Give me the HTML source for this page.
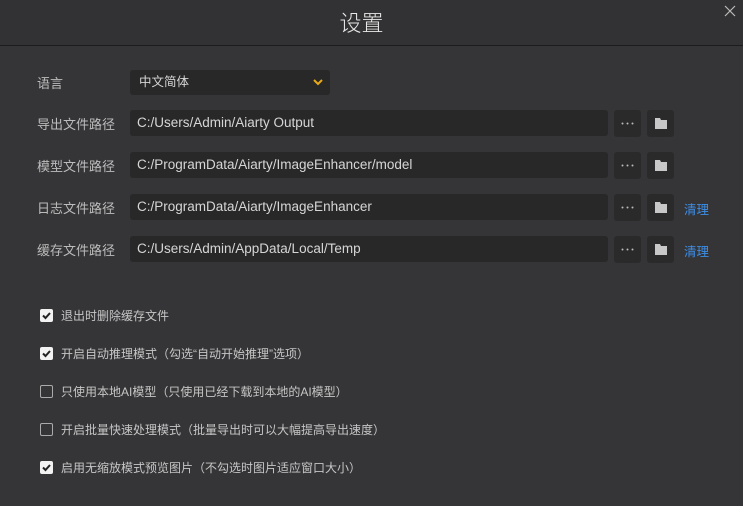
<!DOCTYPE html>
<html><head><meta charset="utf-8"><style>
*{margin:0;padding:0;box-sizing:border-box}
body{width:743px;height:506px;background:#353537;font-family:"Liberation Sans","Noto Sans CJK SC",sans-serif;color:#c8c8c8;position:relative;overflow:hidden;font-size:13px}
.hdr{position:absolute;left:0;top:0;width:743px;height:46px;background:#323234;border-bottom:1px solid #1c1c1c}
.title{position:absolute;left:0;width:723px;top:6px;text-align:center;font-size:22px;color:#e8e8e8;font-weight:300}
.x{position:absolute;left:724px;top:5px}
.lbl{position:absolute;left:37px;font-size:13px;color:#bcbcbc}
.inp{position:absolute;left:130px;width:478px;height:26px;background:#282829;border-radius:3px;line-height:26px;padding-left:7px;color:#d6d6d6;font-size:13.5px}
.btn{position:absolute;width:27px;height:27px;background:#2a2a2b;border-radius:3px}
.dots{left:614px}
.dots svg{position:absolute;left:7px;top:12px}
.fold{left:647px}
.fold svg{position:absolute;left:8px;top:8px}
.clr{position:absolute;left:684px;color:#3d8ee8;font-size:12.5px}
.cb{position:absolute;left:40px;width:13px;height:13px;border-radius:2px}
.on{background:#f2f2f2}
.off{border:1px solid #aaa}
.ct{position:absolute;left:61px;font-size:12px;color:#c6c6c6}
</style></head><body>
<div class="hdr"><div class="title">设置</div><svg class="x" width="12" height="12"><path d="M1 1L11 11M11 1L1 11" stroke="#bbb" stroke-width="1.2"/></svg></div>
<div class="lbl" style="top:73px">语言</div>
<div class="inp" style="top:70px;width:200px;height:25px;line-height:25px;font-size:12.5px;padding-left:9px">中文简体
<svg style="position:absolute;left:183px;top:9px" width="10" height="7" viewBox="0 0 10 7"><path d="M1 1L5 5L9 1" stroke="#e8a917" stroke-width="2" fill="none"/></svg></div>

<div class="lbl" style="top:114px">导出文件路径</div>
<div class="inp" style="top:110px">C:/Users/Admin/Aiarty Output</div>
<div class="btn dots" style="top:110px"><svg width="13" height="3"><circle cx="1.5" cy="1.5" r="1" fill="#bbb"/><circle cx="6.5" cy="1.5" r="1" fill="#bbb"/><circle cx="11.5" cy="1.5" r="1" fill="#bbb"/></svg></div>
<div class="btn fold" style="top:110px"><svg width="12" height="11"><path d="M0 0H5L6 2H12V11H0Z" fill="#c8c8c8"/></svg></div>

<div class="lbl" style="top:156px">模型文件路径</div>
<div class="inp" style="top:152px">C:/ProgramData/Aiarty/ImageEnhancer/model</div>
<div class="btn dots" style="top:152px"><svg width="13" height="3"><circle cx="1.5" cy="1.5" r="1" fill="#bbb"/><circle cx="6.5" cy="1.5" r="1" fill="#bbb"/><circle cx="11.5" cy="1.5" r="1" fill="#bbb"/></svg></div>
<div class="btn fold" style="top:152px"><svg width="12" height="11"><path d="M0 0H5L6 2H12V11H0Z" fill="#c8c8c8"/></svg></div>

<div class="lbl" style="top:198px">日志文件路径</div>
<div class="inp" style="top:194px">C:/ProgramData/Aiarty/ImageEnhancer</div>
<div class="btn dots" style="top:194px"><svg width="13" height="3"><circle cx="1.5" cy="1.5" r="1" fill="#bbb"/><circle cx="6.5" cy="1.5" r="1" fill="#bbb"/><circle cx="11.5" cy="1.5" r="1" fill="#bbb"/></svg></div>
<div class="btn fold" style="top:194px"><svg width="12" height="11"><path d="M0 0H5L6 2H12V11H0Z" fill="#c8c8c8"/></svg></div>
<div class="clr" style="top:199px">清理</div>

<div class="lbl" style="top:240px">缓存文件路径</div>
<div class="inp" style="top:236px">C:/Users/Admin/AppData/Local/Temp</div>
<div class="btn dots" style="top:236px"><svg width="13" height="3"><circle cx="1.5" cy="1.5" r="1" fill="#bbb"/><circle cx="6.5" cy="1.5" r="1" fill="#bbb"/><circle cx="11.5" cy="1.5" r="1" fill="#bbb"/></svg></div>
<div class="btn fold" style="top:236px"><svg width="12" height="11"><path d="M0 0H5L6 2H12V11H0Z" fill="#c8c8c8"/></svg></div>
<div class="clr" style="top:241px">清理</div>

<div class="cb on" style="top:309px"><svg width="13" height="13"><path d="M3 6.5L5.5 9L10 4" stroke="#222" stroke-width="2" fill="none"/></svg></div>
<div class="ct" style="top:307px">退出时删除缓存文件</div>
<div class="cb on" style="top:347px"><svg width="13" height="13"><path d="M3 6.5L5.5 9L10 4" stroke="#222" stroke-width="2" fill="none"/></svg></div>
<div class="ct" style="top:345px">开启自动推理模式（勾选“自动开始推理”选项）</div>
<div class="cb off" style="top:385px"></div>
<div class="ct" style="top:383px">只使用本地AI模型（只使用已经下载到本地的AI模型）</div>
<div class="cb off" style="top:423px"></div>
<div class="ct" style="top:421px">开启批量快速处理模式（批量导出时可以大幅提高导出速度）</div>
<div class="cb on" style="top:461px"><svg width="13" height="13"><path d="M3 6.5L5.5 9L10 4" stroke="#222" stroke-width="2" fill="none"/></svg></div>
<div class="ct" style="top:459px">启用无缩放模式预览图片（不勾选时图片适应窗口大小）</div>
</body></html>
